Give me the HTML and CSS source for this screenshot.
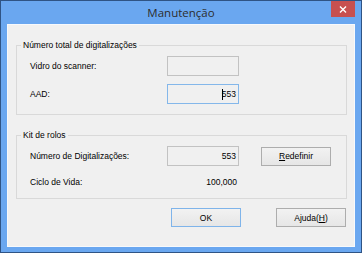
FILE: index.html
```html
<!DOCTYPE html>
<html lang="pt">
<head>
<meta charset="utf-8">
<title>Manutenção</title>
<link rel="stylesheet" href="styles.css">
</head>
<body>
<div class="window">
  <div class="titlebar">
    <span></span>
    <span class="title">Manutenção</span>
    <span class="close">
      <svg width="8" height="7" viewBox="0 0 8 7"><path d="M1 0.5 L7 6.5 M7 0.5 L1 6.5" stroke="#fff" stroke-width="1.4" fill="none"/></svg>
    </span>
  </div>
  <div class="client">
    <fieldset class="group group-total">
      <legend>Número total de digitalizações</legend>
      <div class="row">
        <span class="label">Vidro do scanner:</span>
        <span class="field"></span>
      </div>
      <div class="row">
        <span class="label">AAD:</span>
        <span class="field focused"><span class="caret"></span>553</span>
      </div>
    </fieldset>
    <fieldset class="group group-kit">
      <legend>Kit de rolos</legend>
      <div class="row">
        <span class="label">Número de Digitalizações:</span>
        <span class="field">553</span>
        <button class="btn btn-reset"><u>R</u>edefinir</button>
      </div>
      <div class="row row-short">
        <span class="label">Ciclo de Vida:</span>
        <span class="value">100,000</span>
      </div>
    </fieldset>
    <div class="actions">
      <button class="btn btn-default">OK</button>
      <button class="btn">Ajuda(<u>H</u>)</button>
    </div>
  </div>
</div>
</body>
</html>
```

FILE: styles.css
```css
* { box-sizing: border-box; }
html, body { margin: 0; padding: 0; }
body { width: 362px; height: 253px; overflow: hidden; background: #6aa7f0; }

.window {
  width: 362px;
  height: 253px;
  border: 1px solid #2f5485;
  background: #6aa7f0;
  padding: 0 6px 5px 6px;
  display: flex;
  flex-direction: column;
}

.titlebar {
  height: 23px;
  display: grid;
  grid-template-columns: 1fr auto 1fr;
  align-items: start;
}
.title {
  font-family: "Open Sans", "Noto Sans", sans-serif;
  font-size: 11.5px;
  line-height: 23px;
  color: #2d2d2d;
}
.close {
  justify-self: end;
  width: 24px;
  height: 16px;
  background: #c75050;
  display: flex;
  align-items: center;
  justify-content: center;
}
.close svg { display: block; }

.client {
  flex: 1;
  border: 1px solid #f7f9fc;
  background: #f0f0f0;
  padding: 15px 7px 0 8px;
  font-family: "Liberation Sans", Arial, sans-serif;
  font-size: 8.5px;
  color: #000;
  display: flex;
  flex-direction: column;
}

.group {
  margin: 0;
  border: 1px solid #d9d9d9;
  padding: 5px 0 10px 13px;
  display: flex;
  flex-direction: column;
  gap: 8px;
  min-width: 0;
}
.group legend {
  padding: 0 2px;
  margin-left: -9px;
  line-height: 11px;
}
.group-kit { margin-top: 15px; padding-bottom: 8px; }

.row {
  display: flex;
  align-items: center;
  height: 20px;
}
.row-short { height: 16px; }
.label { width: 137px; flex: none; }

.field {
  width: 72px;
  height: 20px;
  border: 1px solid #c2c2c2;
  background: #f0f0f0;
  display: flex;
  align-items: center;
  justify-content: flex-end;
  padding-right: 2px;
}
.field.focused { border-color: #84b7ea; }
.caret {
  width: 1px;
  height: 11px;
  background: #000;
  margin-right: -1px;
}
.value { width: 72px; text-align: right; padding-right: 2px; }

.btn {
  font-family: "Liberation Sans", Arial, sans-serif;
  font-size: 8.5px;
  color: #000;
  width: 70px;
  height: 19px;
  padding: 0;
  border: 1px solid #adadad;
  background: linear-gradient(#f2f2f2, #e6e6e6);
}
.btn-reset { margin-left: 22px; }
.btn-default { border-color: #7fb4ea; }

.actions {
  margin-top: 9px;
  display: flex;
  justify-content: flex-end;
  gap: 35px;
  padding-right: 1px;
}
```
